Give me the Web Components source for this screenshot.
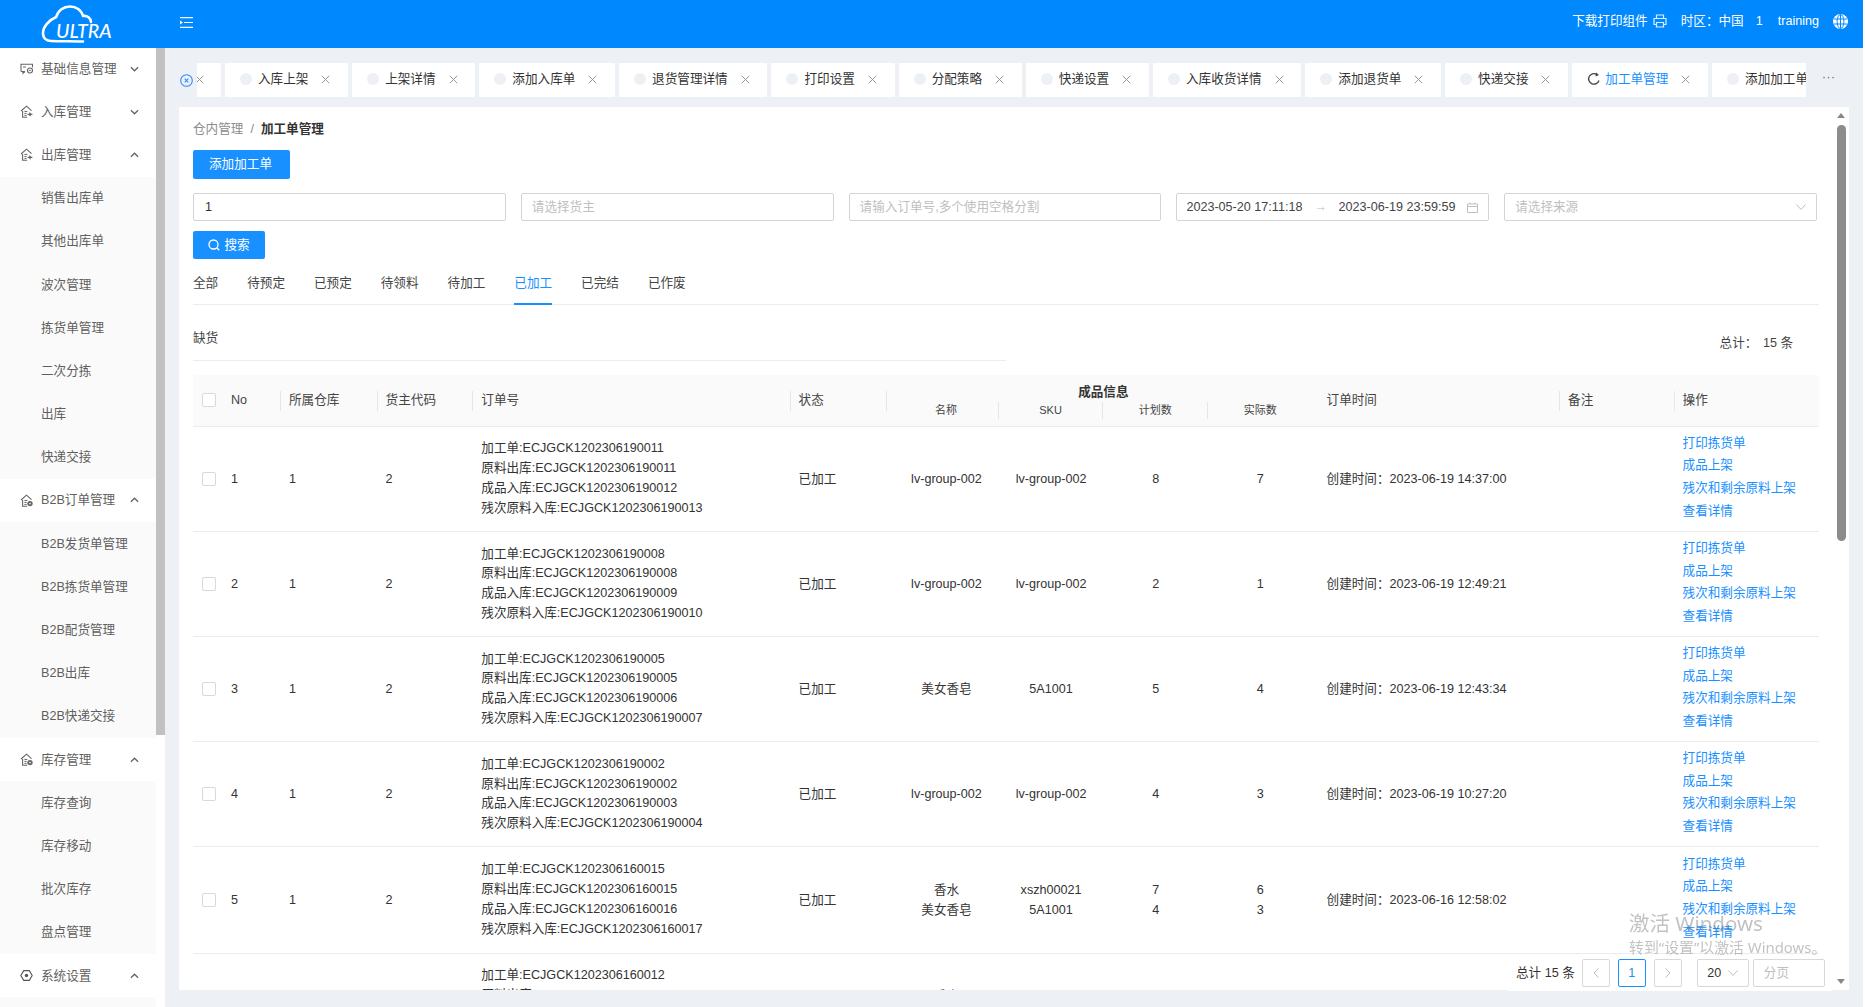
<!DOCTYPE html>
<html lang="zh"><head><meta charset="utf-8"><title>加工单管理</title>
<style>
html,body{margin:0;height:100%;overflow:hidden;background:#fff}
body{font:12.6px/16px "Liberation Sans","Noto Sans CJK SC",sans-serif;color:#333;width:1863px;height:1007px;display:flex;flex-direction:column;
--blue:#1890ff;--cols:88px 96.6px 95.7px 317.3px 103.6px 104.6px 104.6px 104.6px 104.6px 247.5px 115px 144px}
ultra-shell{flex:1;min-height:0}
</style></head><body>
<app-header></app-header>
<ultra-shell>
  <side-menu slot="side">
    <menu-group label="基础信息管理" icon="card"></menu-group>
    <menu-group label="入库管理" icon="house"></menu-group>
    <menu-group label="出库管理" icon="house" open>
      <menu-item>销售出库单</menu-item><menu-item>其他出库单</menu-item><menu-item>波次管理</menu-item><menu-item>拣货单管理</menu-item><menu-item>二次分拣</menu-item><menu-item>出库</menu-item><menu-item>快递交接</menu-item>
    </menu-group>
    <menu-group label="B2B订单管理" icon="house2" open>
      <menu-item>B2B发货单管理</menu-item><menu-item>B2B拣货单管理</menu-item><menu-item>B2B配货管理</menu-item><menu-item>B2B出库</menu-item><menu-item>B2B快递交接</menu-item>
    </menu-group>
    <menu-group label="库存管理" icon="house2" open>
      <menu-item>库存查询</menu-item><menu-item>库存移动</menu-item><menu-item>批次库存</menu-item><menu-item>盘点管理</menu-item>
    </menu-group>
    <menu-group label="系统设置" icon="hex" open><menu-item></menu-item></menu-group>
  </side-menu>
  <tab-bar slot="tabs">
    <tab-item stub></tab-item>
    <tab-item>入库上架</tab-item><tab-item>上架详情</tab-item><tab-item>添加入库单</tab-item><tab-item>退货管理详情</tab-item><tab-item>打印设置</tab-item><tab-item>分配策略</tab-item><tab-item>快递设置</tab-item><tab-item>入库收货详情</tab-item><tab-item>添加退货单</tab-item><tab-item>快递交接</tab-item><tab-item active>加工单管理</tab-item><tab-item>添加加工单</tab-item>
  </tab-bar>
  <work-card slot="main">
    <bread-crumb></bread-crumb>
    <blue-button add>添加加工单</blue-button>
    <filter-form></filter-form>
    <status-tabs></status-tabs>
    <stock-row></stock-row>
    <order-head></order-head>
    <order-row no="1" wh="1" owner="2" st="已加工" time="2023-06-19 14:37:00" codes="ECJGCK1202306190011|ECJGCK1202306190011|ECJGCK1202306190012|ECJGCK1202306190013" items="lv-group-002,lv-group-002,8,7"></order-row>
    <order-row no="2" wh="1" owner="2" st="已加工" time="2023-06-19 12:49:21" codes="ECJGCK1202306190008|ECJGCK1202306190008|ECJGCK1202306190009|ECJGCK1202306190010" items="lv-group-002,lv-group-002,2,1"></order-row>
    <order-row no="3" wh="1" owner="2" st="已加工" time="2023-06-19 12:43:34" codes="ECJGCK1202306190005|ECJGCK1202306190005|ECJGCK1202306190006|ECJGCK1202306190007" items="美女香皂,5A1001,5,4"></order-row>
    <order-row no="4" wh="1" owner="2" st="已加工" time="2023-06-19 10:27:20" codes="ECJGCK1202306190002|ECJGCK1202306190002|ECJGCK1202306190003|ECJGCK1202306190004" items="lv-group-002,lv-group-002,4,3"></order-row>
    <order-row tall no="5" wh="1" owner="2" st="已加工" time="2023-06-16 12:58:02" codes="ECJGCK1202306160015|ECJGCK1202306160015|ECJGCK1202306160016|ECJGCK1202306160017" items="香水,xszh00021,7,6;美女香皂,5A1001,4,3"></order-row>
    <order-row no="6" wh="1" owner="2" st="已加工" time="2023-06-16 12:40:11" codes="ECJGCK1202306160012|ECJGCK1202306160012|ECJGCK1202306160013|ECJGCK1202306160014" items="香水,xszh00021,7,6;美女香皂,5A1001,4,3"></order-row>
    <page-bar slot="over"></page-bar>
    <fake-scroll slot="over"></fake-scroll>
  </work-card>
</ultra-shell>
<win-mark></win-mark>
<script>
function def(name,html){
  customElements.define(name,class extends HTMLElement{
    constructor(){super();this.attachShadow({mode:'open'}).innerHTML=typeof html==='function'?'':html;}
    connectedCallback(){if(typeof html==='function')this.shadowRoot.innerHTML=html(this);}
  });
}
const chev=o=>`<svg viewBox="0 0 10 6" width="9" height="6" fill="none" stroke="#666" stroke-width="1.5"><path d="${o?'M1 5l4-4 4 4':'M1 1l4 4 4-4'}"/></svg>`;
const ICONS={
 card:`<path d="M1 9.5V2.2h11.5v3.4M5 9.5H1M3 9.5v1.8l2-1.8" fill="none" stroke="#666" stroke-width="1.1"/><circle cx="10" cy="8.5" r="2.5" fill="none" stroke="#666" stroke-width="1.2"/><circle cx="10" cy="8.5" r=".8" fill="#666"/><path d="M3 5h3" stroke="#666"/>`,
 house:`<path d="M1 6L6.5 1.2 11.5 5.6M2.6 6v6.3h4.6" fill="none" stroke="#666" stroke-width="1.1"/><path d="M4.4 6.4h3M4.4 8.4h2.2M4.4 10.4h2.2" stroke="#666"/><path d="M7.6 9.4h3.4l-1.6-1.7M12.4 9.4H9l1.6 1.8" fill="none" stroke="#666" stroke-width="1.1"/>`,
 house2:`<path d="M1 6L6.5 1.2 11.5 5.6M2.6 6v6.3h4.6" fill="none" stroke="#666" stroke-width="1.1"/><path d="M4.4 6.4h3M4.4 8.4h2.2M4.4 10.4h2.2" stroke="#666"/><circle cx="10" cy="9.6" r="2.7" fill="#666"/><circle cx="10" cy="9.6" r=".8" fill="#fff"/>`,
 hex:`<path d="M3.7 1.6h5.6L12.2 6.5 9.3 11.4H3.7L.8 6.5z" fill="none" stroke="#555" stroke-width="1.1"/><circle cx="6.5" cy="6.5" r="1.7" fill="#555"/>`};

def('ultra-shell',`<style>
:host{display:flex;min-height:0;width:100%;height:959px;background:#edf0f5;overflow:hidden}
.side{width:165px;flex:none;height:100%;overflow:hidden;background:#fff}
.main{flex:1;min-width:0;display:flex;flex-direction:column;padding:0 14px 17px;box-sizing:border-box;height:100%}
</style><div class="side"><slot name="side"></slot></div><div class="main"><slot name="tabs"></slot><slot name="main"></slot></div>`);

def('app-header',`<style>
:host{display:flex;align-items:center;flex:none;height:48px;width:100%;background:#0088ff;color:#fff;box-sizing:border-box}
.logo{width:180px;flex:none;height:48px;position:relative}
.logo svg{display:block;position:absolute;left:0;top:0}
.logo b{position:absolute;left:56px;top:21px;font:italic 500 19.5px/20px Lato,"Liberation Sans",sans-serif;letter-spacing:0;color:#fff}
.grow{flex:1}
.r{display:flex;align-items:center;padding:0 15px 6px 0}
.r span{white-space:nowrap}
svg{display:block}
.mi{margin-top:-4px}
</style>
<div class="logo"><svg width="120" height="48" fill="none" stroke="#fff" stroke-width="2.6" stroke-linecap="round" stroke-linejoin="round"><path d="M91 22c0-4-4-6.800-8-6-1.500-6-7-9.500-13-9.500-6.500 0-12 4-13.800 10.500C49 20 43 27 43 33c0 5.500 4 8 8 8 10 .5 22 0 32 .5"/></svg><b>ULTRA</b></div>
<svg class="mi" width="13" height="11" viewBox="0 0 13 11" fill="#fff"><path d="M0 0h13v1.200H0zM4 4.900h9v1.200H4zM0 9.800h13V11H0zM0 3.500l3 2-3 2z"/></svg>
<div class="grow"></div>
<div class="r">
 <span>下载打印组件</span>
 <svg style="margin:0 14px 0 5px" width="14" height="14" viewBox="0 0 14 14" fill="none" stroke="#dbeeff" stroke-width="1.200"><path d="M3.500 4.500V1h7v3.500M3.500 10.500H1V4.500h12v6h-2.500M3.500 8.500h7V13h-7z"/></svg>
 <span>时区：中国</span><span style="margin-left:12px">1</span><span style="margin-left:15px">training</span>
 <svg style="margin-left:14px" width="15" height="15" viewBox="0 0 15 15"><circle cx="7.500" cy="7.500" r="7.500" fill="#fff"/><g fill="none" stroke="#0088ff" stroke-width="1"><ellipse cx="7.500" cy="7.500" rx="3.400" ry="7"/><path d="M7.500 .5v14M1 5h13M1 10h13"/></g></svg>
</div>`);

def('side-menu',`<style>
:host{display:flex;height:100%;width:165px}
.m{width:156px;height:100%;overflow:hidden;flex:none}
.w{margin-top:-1px}
.s{width:9px;height:100%;background:#fff;flex:none}
.t{height:687px;background:#c1c1c1}
</style><div class="m"><div class="w"><slot></slot></div></div><div class="s"><div class="t"></div></div>`);

def('menu-group',el=>`<style>
:host{display:block;color:#5f5f5f}
.h{display:flex;align-items:center;height:43.2px;padding-left:20px;padding-right:17px;background:#fff}
.h svg.i{margin-right:8px;flex:none}
.h span{flex:1;white-space:nowrap}
.sub{background:#fafafa}
</style><div class="h"><svg class="i" width="13" height="13" viewBox="0 0 13 13">${ICONS[el.getAttribute('icon')]}</svg><span>${el.getAttribute('label')}</span>${chev(el.hasAttribute('open'))}</div>
${el.hasAttribute('open')?'<div class="sub"><slot></slot></div>':''}`);

def('menu-item',`<style>:host{display:flex;align-items:center;height:43.2px;padding-left:41px;white-space:nowrap;color:#5f5f5f}</style><slot></slot>`);

def('tab-bar',`<style>
:host{display:flex;align-items:center;flex:none;height:59px;padding-top:15px;padding-bottom:10px;box-sizing:border-box;position:relative}
.c{width:19px;flex:none;margin-left:1px}
.c svg{display:block}
.strip{width:1609px;overflow:hidden;display:flex;gap:4px;margin-left:-2px;flex:none}
.more{margin-left:16px;color:#666;font-size:12px;line-height:8px;letter-spacing:.5px;height:14px}
</style><div class="c"><svg width="13" height="13" viewBox="0 0 13 13" fill="none" stroke="#2f8cff" stroke-width="1.100"><circle cx="6.500" cy="6.500" r="5.800"/><path d="M4.700 4.700l3.600 3.600M8.300 4.700L4.700 8.300"/></svg></div>
<div class="strip"><slot></slot></div><div class="more">···</div>`);

def('tab-item',el=>{const stub=el.hasAttribute('stub'),act=el.hasAttribute('active');return `<style>
:host{display:flex;align-items:center;height:34px;flex:none;background:#fff;color:#333;white-space:nowrap;box-sizing:border-box;padding:0 17.800px 2px 15px}
:host([stub]){width:24px;padding:0;overflow:hidden}
:host([stub]) svg.x{margin:0 0 2px -2px}
:host([active]) .t{color:var(--blue)}
.dot{width:12px;height:12px;border-radius:50%;background:#edf0f5;margin-right:6px;flex:none}
svg{display:block;flex:none}
svg.x{margin-left:13px}
svg.re{margin-right:4px}
</style>${stub?'':(act?`<svg class="re" width="14" height="14" viewBox="0 0 14 14" fill="none" stroke="#444" stroke-width="1.300"><path d="M12 8.500A5.300 5.300 0 1 1 9.600 2.300"/><path d="M9 .5l3 2.500-3.500 1.500z" fill="#444" stroke="none"/></svg>`:'<span class="dot"></span>')}${stub?'':'<span class="t"><slot></slot></span>'}<svg class="x" viewBox="0 0 10 10" width="9" height="9" fill="none" stroke="#8f8f8f" stroke-width="1"><path d="M.8.8l8.400 8.400M9.200.8L.8 9.200"/></svg>`});

def('work-card',`<style>
:host{display:block;flex:1;min-height:0;position:relative;background:#fff}
.s{height:100%;overflow:hidden;padding:13px 30px 0 14px;box-sizing:border-box}
</style><div class="s"><slot></slot></div><slot name="over"></slot>`);

def('bread-crumb',`<style>
:host{display:flex;height:18px;align-items:center;margin-bottom:12px;white-space:nowrap;color:#8c8c8c}
i{font-style:normal;margin:0 7px}
b{color:#333;font-weight:600}
</style><span>仓内管理</span><i>/</i><b>加工单管理</b>`);

def('blue-button',`<style>
:host{display:flex;align-items:center;justify-content:center;gap:4px;width:97px;height:29px;box-sizing:border-box;background:var(--blue);color:#fff;border-radius:2px;white-space:nowrap}
:host([add]){padding:0 2px 2px 0}
:host(:not([add])){width:72px;height:28px}
</style><slot></slot>`);

def('filter-form',`<style>
:host{display:block;margin-top:14px;margin-right:2px}
.g{display:grid;grid-template-columns:repeat(5,1fr);gap:15px}
.f{height:28px;box-sizing:border-box;border:1px solid #d4d4d4;border-radius:2px;display:flex;align-items:center;padding:0 10px;color:#bfbfbf;white-space:nowrap;overflow:hidden}
.v{color:#333}
.d{color:#444;justify-content:space-between;padding-left:9px}
.d em{font-style:normal;color:#bfbfbf;margin:0 8px}
blue-button{margin-top:10px}
svg{display:block;flex:none}
</style><div class="g">
<div class="f v"><span style="margin-left:1px">1</span></div><div class="f">请选择货主</div><div class="f">请输入订单号,多个使用空格分割</div>
<div class="f d"><span>2023-05-20 17:11:18</span><em>→</em><span>2023-06-19 23:59:59</span><svg style="margin-left:8px" width="11" height="11" viewBox="0 0 11 11" fill="none" stroke="#bfbfbf"><path d="M.5 2h10v8.500H.5zM.5 4.500h10M3 .5V2M8 .5V2"/></svg></div>
<div class="f" style="justify-content:space-between"><span>请选择来源</span><svg width="10" height="6" viewBox="0 0 10 6" fill="none" stroke="#bfbfbf"><path d="M.5.5L5 5.500 9.500.5"/></svg></div>
</div><blue-button><svg width="12" height="12" viewBox="0 0 12 12" fill="none" stroke="#fff" stroke-width="1.300"><circle cx="5.500" cy="5.500" r="4.500"/><path d="M8.800 8.800l2.400 2.400"/></svg>搜索</blue-button>`);

def('status-tabs',`<style>
:host{display:flex;gap:29px;margin-top:14px;height:32px;box-sizing:border-box;border-bottom:1px solid #ececec;white-space:nowrap;color:#444}
span{height:32px;box-sizing:border-box;line-height:20px;padding:0;margin-top:0}
.a{color:var(--blue);border-bottom:2px solid var(--blue)}
</style><span>全部</span><span>待预定</span><span>已预定</span><span>待领料</span><span>待加工</span><span class="a">已加工</span><span>已完结</span><span>已作废</span>`);

def('stock-row',`<style>
:host{display:flex;justify-content:space-between;height:56px;margin-bottom:14px;box-sizing:border-box;padding-right:26px;color:#444}
.l{width:813px;box-sizing:border-box;padding-top:25px;height:56px;border-bottom:1px solid #ececec;line-height:16px}
.r{padding-top:30px;line-height:16px;white-space:nowrap}
</style><div class="l">缺货</div><div class="r">总计：<span style="margin-left:5.500px">15 条</span></div>`);

def('order-head',`<style>
:host{display:grid;grid-template-columns:var(--cols);height:52px;background:#fafafa;border-bottom:1px solid #ececec;box-sizing:border-box;color:#444;white-space:nowrap}
.c{position:relative;display:flex;align-items:center;padding-left:8px;padding-bottom:2px}
.c.d::after{content:"";position:absolute;right:0;top:16px;height:20px;width:1px;background:#e6e6e6}
.c.st::after{right:7px}
.sel{padding-left:9px}
.cb{width:14px;height:14px;border:1px solid #d9d9d9;border-radius:2px;background:#fff;box-sizing:border-box;margin-right:15px}
.g{grid-column:span 4;display:flex;flex-direction:column;align-items:stretch;padding-top:9px}
.g b{text-align:center;font-weight:600;line-height:16px;color:#333}
.u{display:grid;grid-template-columns:repeat(4,1fr);margin-top:2px}
.u span{font-size:11px;line-height:17px;text-align:center;border-right:1px solid #e6e6e6}
.u span:last-child{border:0}
</style>
<div class="c d sel"><span class="cb"></span>No</div><div class="c d">所属仓库</div><div class="c d">货主代码</div><div class="c d">订单号</div><div class="c d st">状态</div>
<div class="g"><b>成品信息</b><div class="u"><span>名称</span><span>SKU</span><span>计划数</span><span>实际数</span></div></div>
<div class="c d" style="padding-left:14px">订单时间</div><div class="c d">备注</div><div class="c" style="padding-left:7.500px">操作</div>`);

def('order-row',el=>{
 const a=n=>el.getAttribute(n);
 const L=['加工单:','原料出库:','成品入库:','残次原料入库:'];
 const codes=a('codes').split('|').map((c,i)=>`<div>${L[i]}${c}</div>`).join('');
 const it=a('items').split(';').map(s=>s.split(','));
 const col=i=>`<div class="c m">${it.map(r=>`<div>${r[i]}</div>`).join('')}</div>`;
 return `<style>
:host{display:grid;grid-template-columns:var(--cols);height:105.100px;border-bottom:1px solid #ececec;box-sizing:border-box;color:#333;white-space:nowrap}
:host([tall]){height:106.300px}
.c{display:flex;flex-direction:column;justify-content:center;padding-left:8px}
.sel{flex-direction:row;align-items:center;justify-content:flex-start;padding-left:9px}
.cb{width:14px;height:14px;border:1px solid #d9d9d9;border-radius:2px;box-sizing:border-box;margin-right:15px}
.m{padding:0;text-align:center;line-height:20px}
.o{line-height:19.800px}
.l{color:var(--blue);line-height:22.600px;padding-bottom:4px;padding-left:7.500px}
</style><div class="c sel"><span class="cb"></span>${a('no')}</div><div class="c">${a('wh')}</div><div class="c">${a('owner')}</div>
<div class="c o">${codes}</div><div class="c">${a('st')}</div>${col(0)}${col(1)}${col(2)}${col(3)}
<div class="c" style="padding-left:14px">创建时间：${a('time')}</div><div class="c"></div>
<div class="c l"><div>打印拣货单</div><div>成品上架</div><div>残次和剩余原料上架</div><div>查看详情</div></div>`});

def('page-bar',`<style>
:host{position:absolute;left:1329px;top:847px;width:324px;height:37px;background:#fff;display:flex;align-items:center;box-sizing:border-box;padding-left:8px;white-space:nowrap;color:#333}
.b{height:28px;box-sizing:border-box;border:1px solid #d9d9d9;border-radius:2px;display:flex;align-items:center;justify-content:center;flex:none}
.p{width:28px}
.a{border-color:var(--blue);color:var(--blue)}
svg{display:block}
</style><span>总计 15 条</span>
<div class="b p" style="margin-left:7px"><svg width="6" height="10" viewBox="0 0 6 10" fill="none" stroke="#bfbfbf"><path d="M5.500.5L1 5l4.500 4.500"/></svg></div>
<div class="b p a" style="margin-left:8px">1</div>
<div class="b p" style="margin-left:8px"><svg width="6" height="10" viewBox="0 0 6 10" fill="none" stroke="#bfbfbf"><path d="M.5.500L5 5 .5 9.500"/></svg></div>
<div class="b" style="width:52px;margin-left:15px;gap:7px"><span>20</span><svg width="10" height="6" viewBox="0 0 10 6" fill="none" stroke="#bfbfbf"><path d="M.5.500L5 5.500 9.500.5"/></svg></div>
<div class="b" style="width:72px;margin-left:4px;justify-content:flex-start;padding-left:10px;color:#bfbfbf">分页</div>`);

def('fake-scroll',`<style>
:host{position:absolute;left:1658px;top:0;width:9px;height:883px}
.u,.d{position:absolute;left:0;width:0;height:0;border-left:4.500px solid transparent;border-right:4.500px solid transparent}
.u{top:6px;border-bottom:5px solid #888}
.d{bottom:6px;border-top:5px solid #888}
.t{position:absolute;left:0;top:18px;width:9px;height:416px;background:#8c8c8c;border-radius:5px}
</style><i class="u"></i><div class="t"></div><i class="d"></i>`);

def('win-mark',`<style>
:host{position:fixed;left:1629px;top:910px;color:rgba(120,120,120,.45);white-space:nowrap;pointer-events:none;font-family:"Noto Sans","Noto Sans CJK SC",sans-serif}
div{font-size:20.500px;line-height:26px}
p{margin:0;font-size:14.900px;line-height:20px;margin-top:1px}
</style><div>激活 Windows</div><p>转到“设置”以激活 Windows。</p>`);
</script>
</body></html>
